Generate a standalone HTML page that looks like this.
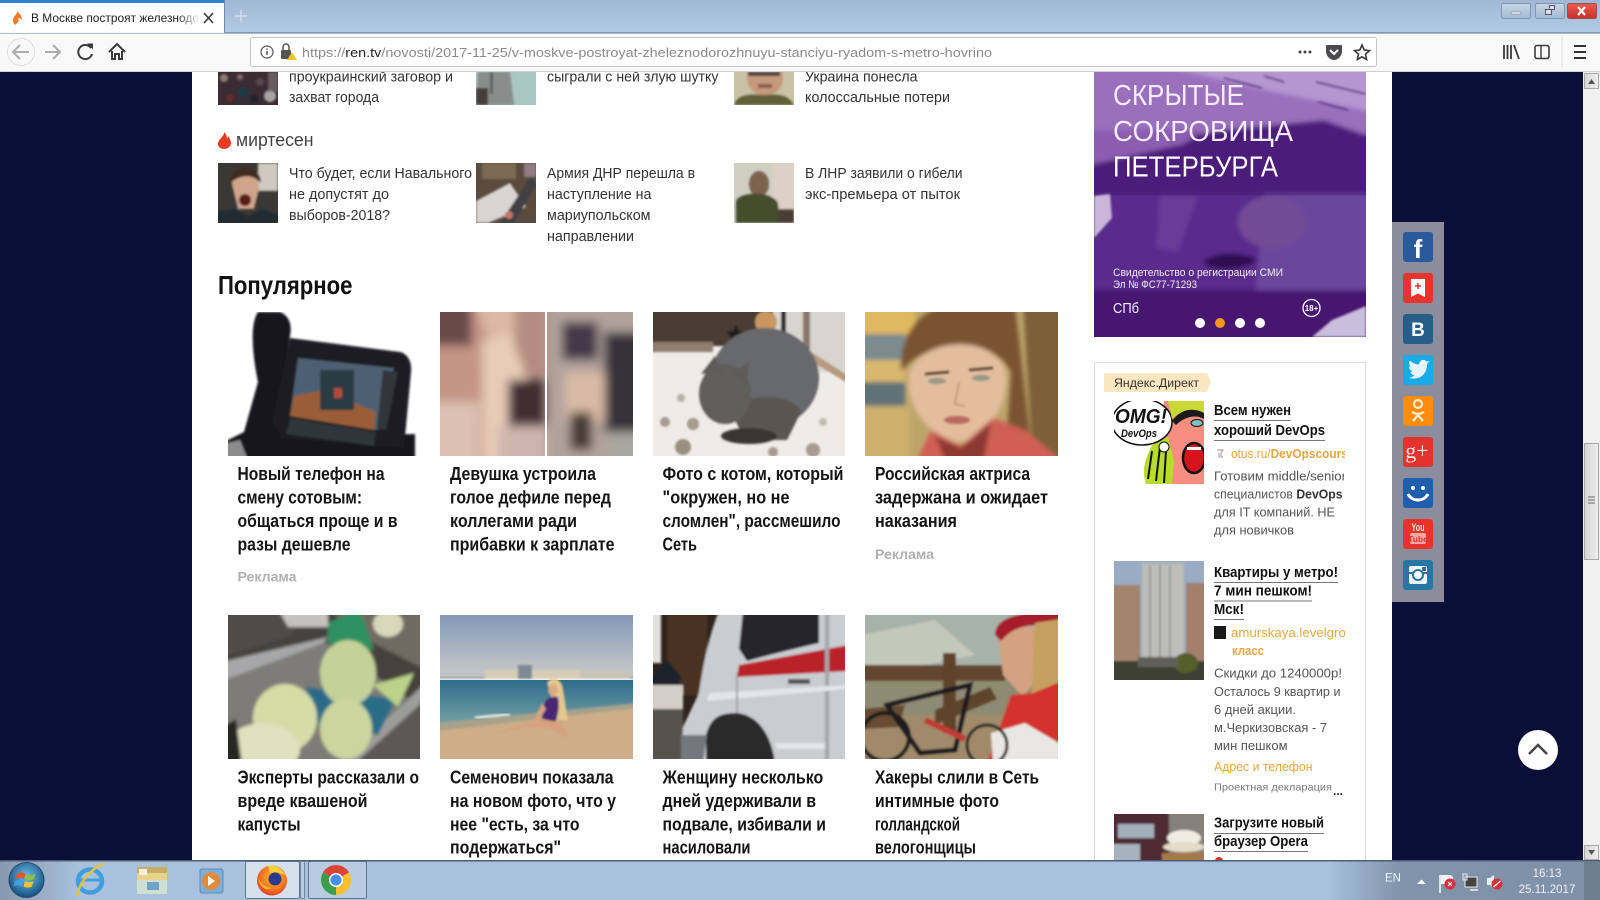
<!DOCTYPE html>
<html lang="ru"><head><meta charset="utf-8"><title>В Москве построят железнодорожную станцию</title>
<style>html,body{margin:0;padding:0;background:#0a0f38;overflow:hidden}svg{display:block}
text{font-family:"Liberation Sans","Noto Sans CJK SC",sans-serif}
.n{font-size:14.5px;fill:#333}.t{font-size:18px;font-weight:700;fill:#151515}.a{font-size:15px;font-weight:700;fill:#111}.d{font-size:13px;fill:#555}.o{font-size:13px;fill:#e9a63f}.r{font-size:13.5px;font-weight:700;fill:#b0b0b0}</style></head><body>
<svg xmlns="http://www.w3.org/2000/svg" width="1600" height="900" viewBox="0 0 1600 900">
<defs>
<linearGradient id="ti" x1="0" y1="0" x2="0" y2="1"><stop offset="0" stop-color="#a0b8d4"/><stop offset="1" stop-color="#b2cbe4"/></linearGradient>
<linearGradient id="tb" x1="0" y1="0" x2="1" y2="0"><stop offset="0" stop-color="#8799ad"/><stop offset=".05" stop-color="#a9c1dd"/><stop offset=".83" stop-color="#a9c1dd"/><stop offset=".875" stop-color="#7f93ab"/><stop offset="1" stop-color="#7f92a9"/></linearGradient>
<linearGradient id="sky" x1="0" y1="0" x2="0" y2="1"><stop offset="0" stop-color="#8499b8"/><stop offset="1" stop-color="#c6c8c8"/></linearGradient>
<linearGradient id="sea" x1="0" y1="0" x2="0" y2="1"><stop offset="0" stop-color="#2e6a8c"/><stop offset="1" stop-color="#7fa9a8"/></linearGradient>
<linearGradient id="cl" x1="0" y1="0" x2="0" y2="1"><stop offset="0" stop-color="#ee5a50"/><stop offset="1" stop-color="#c9302a"/></linearGradient>
<linearGradient id="btn" x1="0" y1="0" x2="0" y2="1"><stop offset="0" stop-color="#c8d6e6"/><stop offset="1" stop-color="#a3bad3"/></linearGradient>
<linearGradient id="st" x1="0" y1="0" x2="1" y2="0"><stop offset="0" stop-color="#d4d4d4"/><stop offset="1" stop-color="#efefef"/></linearGradient>
<linearGradient id="fade" x1="0" y1="0" x2="1" y2="0"><stop offset="0" stop-color="#fff" stop-opacity="0"/><stop offset="1" stop-color="#fff"/></linearGradient>
<radialGradient id="orb" cx=".5" cy=".4" r=".6"><stop offset="0" stop-color="#6fbde6"/><stop offset="1" stop-color="#14507f"/></radialGradient>
<radialGradient id="ff" cx=".55" cy=".4" r=".65"><stop offset="0" stop-color="#ffc02e"/><stop offset=".6" stop-color="#f57a1f"/><stop offset="1" stop-color="#e2332b"/></radialGradient>
<filter id="b1"><feGaussianBlur stdDeviation="1"/></filter>
<filter id="b15"><feGaussianBlur stdDeviation="1.6"/></filter>
<filter id="b2"><feGaussianBlur stdDeviation="2.5"/></filter>
<filter id="b3"><feGaussianBlur stdDeviation="5"/></filter>
</defs>

<rect width="1600" height="900" fill="#0a0f38"/>
<rect x="192" y="72" width="1200" height="790" fill="#fff"/>

<!-- top row thumbs -->
<svg x="218" y="72" width="60" height="33" viewBox="0 0 60 33"><rect width="60" height="33" fill="#3a2c33"/><g filter="url(#b1)"><circle cx="6" cy="6" r="4" fill="#8d7a73"/><circle cx="22" cy="5" r="3" fill="#7d6a63"/><circle cx="25" cy="20" r="5" fill="#1e3a4a"/><circle cx="42" cy="10" r="4" fill="#584a4c"/><circle cx="52" cy="24" r="6" fill="#a8a4a4"/><circle cx="12" cy="26" r="4" fill="#622c30"/><circle cx="36" cy="27" r="4" fill="#1c2028"/><rect x="50" y="0" width="10" height="20" fill="#7d6d6e" opacity=".7"/></g></svg>
<svg x="476" y="72" width="60" height="33" viewBox="0 0 60 33"><rect width="60" height="33" fill="#a9c6c2"/><g filter="url(#b1)"><path d="M2 0H34L38 33H0Z" fill="#8a8d8c"/><rect x="0" y="16" width="12" height="17" fill="#453e38"/><rect x="14" y="0" width="3" height="22" fill="#5c6060"/></g></svg>
<svg x="734" y="72" width="60" height="33" viewBox="0 0 60 33"><rect width="60" height="33" fill="#c9c2a8"/><g filter="url(#b1)"><ellipse cx="31" cy="6" rx="18" ry="18" fill="#c59a7c"/><path d="M0 33C4 22 14 22 30 23 44 22 54 22 60 33Z" fill="#5f6137"/><rect x="14" y="0" width="32" height="4" fill="#444"/><rect x="24" y="12" width="14" height="4" fill="#8a5a48"/></g></svg>

<text x="289" y="81.500" class="n" textLength="164" lengthAdjust="spacingAndGlyphs">проукраинский заговор и</text>
<text x="289" y="102" class="n" textLength="90" lengthAdjust="spacingAndGlyphs">захват города</text>
<text x="547" y="81.500" class="n" textLength="171.500" lengthAdjust="spacingAndGlyphs">сыграли с ней злую шутку</text>
<text x="805" y="81.500" class="n" textLength="112.500" lengthAdjust="spacingAndGlyphs">Украина понесла</text>
<text x="805" y="102" class="n" textLength="145" lengthAdjust="spacingAndGlyphs">колоссальные потери</text>

<!-- mirtesen -->
<path d="M224 132c1 4-6 7-6 12 0 3 3 5 6 5s7-2 7-6c0-3-2-4-2-7-1 1-2 2-2 3 0-3-1-5-3-7z" fill="#ea3b21"/>
<text x="236" y="146" font-size="18" fill="#444" textLength="77.500" lengthAdjust="spacingAndGlyphs">миртесен</text>

<!-- second row thumbs -->
<svg x="218" y="163" width="60" height="60" viewBox="0 0 60 60"><rect width="60" height="60" fill="#3a3834"/><g filter="url(#b1)"><rect x="40" y="0" width="20" height="28" fill="#cfcac1"/><path d="M14 22C12 4 42 4 41 26L36 46H20Z" fill="#d0a48a"/><path d="M12 20C13 0 43 0 43 20 34 10 22 12 12 20Z" fill="#3f2a1c"/><ellipse cx="27" cy="37" rx="6" ry="6" fill="#5a1c18"/><path d="M0 60V48L18 46 30 54 44 46 60 52V60Z" fill="#242c32"/></g></svg>
<svg x="476" y="163" width="60" height="60" viewBox="0 0 60 60"><rect width="60" height="60" fill="#5b4b3f"/><g filter="url(#b1)"><path d="M0 38 34 20 50 44 12 60H0Z" fill="#d8d5d4"/><path d="M24 60 56 12 60 22 38 60Z" fill="#3f3f44"/><rect x="6" y="0" width="34" height="16" fill="#7b6b52"/><rect x="48" y="0" width="12" height="14" fill="#8f7d84"/><circle cx="33" cy="52" r="4" fill="#c8735f"/></g></svg>
<svg x="734" y="163" width="60" height="60" viewBox="0 0 60 60"><rect width="60" height="60" fill="#cfcfc4"/><g filter="url(#b1)"><rect x="38" y="0" width="22" height="60" fill="#ddd0c5"/><ellipse cx="25" cy="21" rx="10" ry="13" fill="#7d6250"/><path d="M2 60V38C6 28 38 28 44 40L46 60Z" fill="#444d2b"/><rect x="44" y="46" width="16" height="14" fill="#4a3e34"/></g></svg>

<text x="289" y="178" class="n" textLength="183" lengthAdjust="spacingAndGlyphs">Что будет, если Навального</text>
<text x="289" y="199" class="n" textLength="100" lengthAdjust="spacingAndGlyphs">не допустят до</text>
<text x="289" y="220" class="n" textLength="101" lengthAdjust="spacingAndGlyphs">выборов-2018?</text>
<text x="547" y="178" class="n" textLength="148" lengthAdjust="spacingAndGlyphs">Армия ДНР перешла в</text>
<text x="547" y="199" class="n" textLength="104.500" lengthAdjust="spacingAndGlyphs">наступление на</text>
<text x="547" y="220" class="n" textLength="103.500" lengthAdjust="spacingAndGlyphs">мариупольском</text>
<text x="547" y="241" class="n" textLength="87" lengthAdjust="spacingAndGlyphs">направлении</text>
<text x="805" y="178" class="n" textLength="157.500" lengthAdjust="spacingAndGlyphs">В ЛНР заявили о гибели</text>
<text x="805" y="199" class="n" textLength="155" lengthAdjust="spacingAndGlyphs">экс-премьера от пыток</text>

<text x="218" y="294" font-size="26" font-weight="700" fill="#111" textLength="134.500" lengthAdjust="spacingAndGlyphs">Популярное</text>

<!-- phone -->
<svg x="228" y="312" width="192" height="144" viewBox="0 0 192 144"><rect width="192" height="144" fill="#fff"/><g filter="url(#b1)">
<path d="M30 0H52C62 4 64 14 62 24L56 60 48 110 54 126 187 122V148H-4V130L16 120 30 70C24 40 22 12 30 0Z" fill="#15181d"/>
<path d="M62 26 172 40C180 42 184 50 183 60L176 136 54 126 44 110Z" fill="#1b1e22"/>
<path d="M70 46 166 56 150 118 62 104Z" fill="#4e6073"/><path d="M66 84 96 78 148 100 146 118 62 104Z" fill="#9a5d38"/>
<rect x="92" y="58" width="34" height="40" fill="#2c3a42"/><rect x="106" y="76" width="8" height="10" fill="#b0483c"/>
<path d="M62 106 148 120 146 134 58 122Z" fill="#2f343a"/><path d="M155 58 170 60 158 118 149 116Z" fill="#30353a"/>
<path d="M-4 148V132L12 128 20 148Z" fill="#8c8c8c"/></g></svg>

<!-- blurred girl -->
<svg x="440" y="312" width="193" height="144" viewBox="0 0 193 144"><rect width="193" height="144" fill="#b48d80"/><g filter="url(#b3)"><rect x="-15" y="-15" width="70" height="175" fill="#c49585"/><rect x="-15" y="-15" width="47" height="49" fill="#6b4a48"/><rect x="-15" y="90" width="55" height="70" fill="#dcc0b2"/><path d="M32 -15H75V40L58 50Z" fill="#dcb8a6"/><path d="M42 30 70 20 85 60 80 160H44Z" fill="#e8ccb8"/><rect x="68" y="68" width="38" height="50" fill="#3f2d32"/><rect x="58" y="114" width="48" height="46" fill="#cdb6ae"/><rect x="107" y="-15" width="100" height="175" fill="#b0a39b"/><rect x="122" y="10" width="36" height="38" fill="#45394a"/><rect x="164" y="20" width="45" height="100" fill="#363338"/><rect x="125" y="60" width="40" height="50" fill="#d9baa6"/><rect x="130" y="100" width="22" height="38" fill="#4a3b36"/><rect x="168" y="120" width="40" height="40" fill="#a9a8a0"/></g><rect x="105" y="0" width="2" height="144" fill="#fff"/></svg>

<!-- cat -->
<svg x="653" y="312" width="192" height="144" viewBox="0 0 192 144"><rect width="192" height="144" fill="#efebe7"/><g filter="url(#b1)"><rect x="-4" y="-4" width="124" height="38" fill="#4a3c32"/><rect x="-4" y="30" width="64" height="10" fill="#8f7f70"/><rect x="120" y="-4" width="76" height="64" fill="#d8d5d0"/><path d="M150 -4h7v54h-7z" fill="#8a7668"/><path d="M158 40 196 64V72L156 48Z" fill="#b59a7e"/><path d="M128 -4h5v34h-5z" fill="#2c2a28"/><path d="M83 12l3 7 7 1-5 5 1 7-6-4-6 4 1-7-5-5 7-1z" fill="#241f1c"/><circle cx="113" cy="10" r="11" fill="#c9975e"/>
<ellipse cx="112" cy="66" rx="54" ry="50" fill="#68696d"/><path d="M78 100C90 80 140 80 148 100L134 128H92Z" fill="#5a5650"/><ellipse cx="72" cy="82" rx="26" ry="30" fill="#615f5b"/><path d="M48 62 62 44 70 60ZM80 60 96 50 94 74Z" fill="#5d5c5a"/><ellipse cx="96" cy="124" rx="28" ry="8" fill="#3b3632"/><circle cx="28" cy="86" r="4" fill="#b8aea4"/><circle cx="40" cy="112" r="6" fill="#a79a90"/><circle cx="12" cy="110" r="5" fill="#a79a90"/><circle cx="30" cy="135" r="8" fill="#99907f"/><circle cx="160" cy="138" r="7" fill="#a79a90"/><circle cx="170" cy="110" r="4" fill="#c2bbb0"/><circle cx="120" cy="140" r="5" fill="#a79a90"/></g></svg>

<!-- actress -->
<svg x="865" y="312" width="193" height="144" viewBox="0 0 193 144"><rect width="193" height="144" fill="#bda56a"/><g filter="url(#b2)"><rect x="-8" y="-8" width="58" height="30" fill="#dfb95f"/><rect x="-8" y="22" width="48" height="26" fill="#7b8b8e"/><rect x="-8" y="48" width="48" height="22" fill="#d9b76e"/><rect x="-8" y="70" width="48" height="24" fill="#5e7278"/><rect x="-8" y="94" width="53" height="58" fill="#ceaf6c"/><path d="M36 60C34 8 70-10 100 -8H150L168 152H140L146 60C130 26 60 26 36 60Z" fill="#7a5330"/><path d="M158 -8H201V152H168Z" fill="#7c6038"/><path d="M44 62C56 24 128 22 140 58 146 86 126 126 94 130 62 124 40 94 44 62Z" fill="#e3bd9d"/><path d="M50 152 66 118 96 134 128 106 160 118 201 152Z" fill="#cf6152"/><path d="M70 124 96 136 126 110 118 152H82Z" fill="#8e3730"/></g><g filter="url(#b1)"><path d="M60 62 84 60M104 58 128 56" stroke="#5a4230" stroke-width="2.500"/><ellipse cx="72" cy="69" rx="9" ry="3" fill="#9a9886"/><ellipse cx="116" cy="66" rx="9" ry="3" fill="#9a9886"/><path d="M94 70 90 92 100 94" stroke="#c09478" stroke-width="1.500" fill="none"/><ellipse cx="92" cy="108" rx="13" ry="4" fill="#bb6a60"/></g></svg>

<g transform="translate(0,.2)">
<text x="237.500" y="480" class="t" textLength="147" lengthAdjust="spacingAndGlyphs">Новый телефон на</text>
<text x="237.500" y="503.500" class="t" textLength="124.500" lengthAdjust="spacingAndGlyphs">смену сотовым:</text>
<text x="237.500" y="527" class="t" textLength="160" lengthAdjust="spacingAndGlyphs">общаться проще и в</text>
<text x="237.500" y="550.500" class="t" textLength="113" lengthAdjust="spacingAndGlyphs">разы дешевле</text>
<text x="450" y="480" class="t" textLength="146" lengthAdjust="spacingAndGlyphs">Девушка устроила</text>
<text x="450" y="503.500" class="t" textLength="161" lengthAdjust="spacingAndGlyphs">голое дефиле перед</text>
<text x="450" y="527" class="t" textLength="127" lengthAdjust="spacingAndGlyphs">коллегами ради</text>
<text x="450" y="550.500" class="t" textLength="164.500" lengthAdjust="spacingAndGlyphs">прибавки к зарплате</text>
<text x="662.500" y="480" class="t" textLength="181" lengthAdjust="spacingAndGlyphs">Фото с котом, который</text>
<text x="662.500" y="503.500" class="t" textLength="127" lengthAdjust="spacingAndGlyphs">"окружен, но не</text>
<text x="662.500" y="527" class="t" textLength="178" lengthAdjust="spacingAndGlyphs">сломлен", рассмешило</text>
<text x="662.500" y="550.500" class="t" textLength="34.500" lengthAdjust="spacingAndGlyphs">Сеть</text>
<text x="875" y="480" class="t" textLength="155" lengthAdjust="spacingAndGlyphs">Российская актриса</text>
<text x="875" y="503.500" class="t" textLength="173" lengthAdjust="spacingAndGlyphs">задержана и ожидает</text>
<text x="875" y="527" class="t" textLength="82" lengthAdjust="spacingAndGlyphs">наказания</text>
</g>
<text x="237.500" y="581.500" class="r" textLength="59" lengthAdjust="spacingAndGlyphs">Реклама</text>
<text x="875" y="559" class="r" textLength="59" lengthAdjust="spacingAndGlyphs">Реклама</text>

<!-- cabbage -->
<svg x="228" y="615" width="192" height="144" viewBox="0 0 192 144"><rect width="192" height="144" fill="#44423c"/><g filter="url(#b15)"><rect x="-6" y="-6" width="204" height="156" fill="#44423c"/><path d="M-6 -6H70L65 20 -6 42Z" fill="#4f4c49"/><path d="M50 -6H100V12L60 12Z" fill="#c5c3bd"/><path d="M100 -6H198V55L130 20Z" fill="#6f6a62"/><path d="M100 8 132 -6 146 35 100 28Z" fill="#2e9160"/><ellipse cx="160" cy="9" rx="15" ry="13" fill="#dad7bc"/><path d="M-6 52 95 25 190 90 120 150H30L-6 110Z" fill="#7d7b78"/><path d="M-6 47 100 22 95 28 -6 66Z" fill="#a7a7a9"/><path d="M198 65V150H112Z" fill="#5c5854"/><path d="M198 68V84L125 150H108Z" fill="#9c9c9a"/><path d="M78 72 168 84 150 120 82 105Z" fill="#2a6c88"/><ellipse cx="120" cy="58" rx="28" ry="33" fill="#c6d19a"/><path d="M145 70 186 58 170 92Z" fill="#bcd28a"/><ellipse cx="57" cy="103" rx="32" ry="34" fill="#d6dca6"/><ellipse cx="118" cy="114" rx="26" ry="30" fill="#ccd59e"/><ellipse cx="35" cy="134" rx="37" ry="26" fill="#e0e1be"/><path d="M-6 112 8 104 14 150H-6Z" fill="#262520"/></g></svg>

<!-- beach -->
<svg x="440" y="615" width="193" height="144" viewBox="0 0 193 144"><rect width="193" height="60" fill="url(#sky)"/><g filter="url(#b1)"><rect x="-4" y="60" width="201" height="4" fill="#a8aeae"/><rect x="45" y="55" width="100" height="9" fill="#d7cdb6"/><rect x="78" y="50" width="14" height="14" fill="#7e8a94"/><rect x="140" y="56" width="50" height="8" fill="#c8c4b8"/></g><rect y="65" width="193" height="50" fill="url(#sea)"/><path d="M0 112 193 90V144H0Z" fill="#cdae88"/><path d="M-4 108 197 88V93L-4 116Z" fill="#a9a18a" filter="url(#b1)"/><path d="M35 103 70 99" stroke="#e3e6e0" stroke-width="3" filter="url(#b1)"/><g filter="url(#b1)" transform="translate(0,18)"><path d="M107 50C112 42 122 46 123 56L128 88 118 86Z" fill="#e5c98f"/><ellipse cx="113" cy="57" rx="5" ry="6" fill="#d9aa84"/><path d="M102 82C103 68 108 62 118 64 120 74 118 84 114 90 108 92 102 90 102 82Z" fill="#4a2773"/><path d="M102 86 48 102 88 94 112 96 130 106 122 90Z" fill="#d7a27d"/><path d="M102 70 92 92 96 92 106 76Z" fill="#d7a27d"/></g></svg>

<!-- ambulance -->
<svg x="653" y="615" width="192" height="144" viewBox="0 0 192 144"><rect width="192" height="144" fill="#2f241d"/><g filter="url(#b1)"><rect x="-4" y="-4" width="12" height="52" fill="#e2e2dc"/><rect x="14" y="-4" width="40" height="84" fill="#4a3224"/><path d="M-4 66 14 44 28 62 26 72H-4Z" fill="#1e222a"/><rect x="-4" y="72" width="34" height="76" fill="#57534e"/><rect x="-4" y="70" width="34" height="24" fill="#d5cec8"/><path d="M66 -4H196V148H28L30 112 46 78C50 50 56 20 66 -4Z" fill="#c9ccd0"/><path d="M90 -4H166V28C140 34 116 40 94 46L86 34Z" fill="#26272a"/><path d="M86 50 196 30V56L84 62Z" fill="#ba2029"/><path d="M172 -4H176V148H172Z" fill="#a4a6a8"/><path d="M56 78 196 70V74L54 86Z" fill="#e3e6e8"/><path d="M84 58V100" stroke="#8f9296" stroke-width="1.500"/><rect x="135" y="64" width="22" height="5" fill="#555"/><path d="M53 148V120C58 100 70 98 84 98 104 100 118 118 122 148Z" fill="#2a2929"/><path d="M28 148V120H54L50 148Z" fill="#73777e"/><path d="M122 128H172V134H124Z" fill="#e3e6e8"/></g></svg>

<!-- cyclist -->
<svg x="865" y="615" width="193" height="144" viewBox="0 0 193 144"><rect width="193" height="144" fill="#a59b82"/><g filter="url(#b1)"><rect x="-4" y="-4" width="201" height="56" fill="#a7b2a9"/><path d="M-4 20 70 5 110 40 60 50H-4Z" fill="#c3c8bb"/><rect x="-4" y="100" width="201" height="48" fill="#a08a6a"/><rect x="-4" y="50" width="201" height="50" fill="#8f8a72"/><rect x="-4" y="50" width="144" height="16" fill="#62472e"/><rect x="78" y="38" width="13" height="80" fill="#5e432b"/><path d="M-4 94 40 90 34 112 -4 114Z" fill="#684b31"/><path d="M70 95 125 72 132 84 70 110Z" fill="#5d442c"/><path d="M132 12H172L176 60 158 82 138 60Z" fill="#d3a281"/><path d="M130 20C130 4 150-4 197 -4V12C165 8 150 10 136 26Z" fill="#a51f2a"/><path d="M170 8 197 4V90H166Z" fill="#c6a060"/><path d="M146 80 168 78 197 66V148H122Z" fill="#d3322f"/><path d="M126 118 160 108 197 130V148H128Z" fill="#e9e7e3"/><circle cx="20" cy="122" r="24" fill="none" stroke="#1a1a1c" stroke-width="4"/><path d="M22 90 105 70 90 135 55 138Z" fill="none" stroke="#1d1d20" stroke-width="5"/><path d="M60 105 100 124" stroke="#c13a30" stroke-width="6"/><circle cx="122" cy="130" r="20" fill="none" stroke="#1a1a1c" stroke-width="3"/></g></svg>

<g transform="translate(0,.2)">
<text x="237.500" y="783.500" class="t" textLength="181.500" lengthAdjust="spacingAndGlyphs">Эксперты рассказали о</text>
<text x="237.500" y="807" class="t" textLength="130" lengthAdjust="spacingAndGlyphs">вреде квашеной</text>
<text x="237.500" y="830.500" class="t" textLength="63" lengthAdjust="spacingAndGlyphs">капусты</text>
<text x="450" y="783.500" class="t" textLength="163.500" lengthAdjust="spacingAndGlyphs">Семенович показала</text>
<text x="450" y="807" class="t" textLength="166" lengthAdjust="spacingAndGlyphs">на новом фото, что у</text>
<text x="450" y="830.500" class="t" textLength="129.500" lengthAdjust="spacingAndGlyphs">нее "есть, за что</text>
<text x="450" y="853.500" class="t" textLength="111" lengthAdjust="spacingAndGlyphs">подержаться"</text>
<text x="662.500" y="783.500" class="t" textLength="160.700" lengthAdjust="spacingAndGlyphs">Женщину несколько</text>
<text x="662.500" y="807" class="t" textLength="153.600" lengthAdjust="spacingAndGlyphs">дней удерживали в</text>
<text x="662.500" y="830.500" class="t" textLength="163.500" lengthAdjust="spacingAndGlyphs">подвале, избивали и</text>
<text x="662.500" y="853.500" class="t" textLength="88" lengthAdjust="spacingAndGlyphs">насиловали</text>
<text x="875" y="783.500" class="t" textLength="164" lengthAdjust="spacingAndGlyphs">Хакеры слили в Сеть</text>
<text x="875" y="807" class="t" textLength="124" lengthAdjust="spacingAndGlyphs">интимные фото</text>
<text x="875" y="830.500" class="t" textLength="85" lengthAdjust="spacingAndGlyphs">голландской</text>
<text x="875" y="853.500" class="t" textLength="101" lengthAdjust="spacingAndGlyphs">велогонщицы</text>
</g>

<!-- banner -->
<svg x="1094" y="72" width="272" height="265" viewBox="0 0 272 265"><rect width="272" height="265" fill="#52237f"/><g filter="url(#b2)"><rect x="-8" y="-8" width="288" height="70" fill="#9a6fbd"/><path d="M60 -8H280V40L180 20Z" fill="#b596d0"/><path d="M-8 84 130 58 230 48 280 66V122H-8Z" fill="#4b1d79"/><path d="M-8 58 110 58 90 72 -8 94Z" fill="#8b5cb0"/><path d="M-8 122H280V230L-8 273Z" fill="#5a2a8c"/><path d="M170 122H280V240H160Z" fill="#6a469d"/><path d="M66 124 104 124 84 180 62 176Z" fill="#6a3a98"/><ellipse cx="178" cy="150" rx="34" ry="26" fill="#724c96"/><path d="M108 190C124 178 150 180 164 188 150 198 122 202 108 190Z" fill="#2d0f52"/><path d="M-8 218H280V273H-8Z" fill="#47196f"/></g><path d="M0 122H272" stroke="#3a1366" opacity=".4"/><path d="M0 124 16 122 18 146 0 166Z" fill="#c9b7da" filter="url(#b1)"/><path d="M218 265 238 248 272 234V265Z" fill="#c9bedb" filter="url(#b1)"/><g filter="url(#b1)" opacity=".7"><path d="M222 10 272 22M130 6 168 16M224 30 254 38M170 4 190 10" stroke="#3e1a62" stroke-width="1.500"/></g></svg>
<text x="1113" y="105" font-size="29" fill="#f4ecf8" textLength="131" lengthAdjust="spacingAndGlyphs">СКРЫТЫЕ</text>
<text x="1113" y="141" font-size="29" fill="#f4ecf8" textLength="180" lengthAdjust="spacingAndGlyphs">СОКРОВИЩА</text>
<text x="1113" y="176.500" font-size="29" fill="#fff" textLength="165" lengthAdjust="spacingAndGlyphs">ПЕТЕРБУРГА</text>
<text x="1113" y="276" font-size="11" fill="#eee" textLength="170" lengthAdjust="spacingAndGlyphs">Свидетельство о регистрации СМИ</text>
<text x="1113" y="288" font-size="11" fill="#eee" textLength="84" lengthAdjust="spacingAndGlyphs">Эл № ФС77-71293</text>
<text x="1113" y="313" font-size="15" fill="#f2f2f2" textLength="26" lengthAdjust="spacingAndGlyphs">СПб</text>
<circle cx="1311.500" cy="308" r="8.500" fill="none" stroke="#fff" stroke-width="1.300"/>
<text x="1311.500" y="311" font-size="8" font-weight="700" fill="#fff" text-anchor="middle">18+</text>
<circle cx="1200" cy="323" r="5" fill="#fff"/><circle cx="1220" cy="323" r="5" fill="#f7941e"/><circle cx="1240" cy="323" r="5" fill="#fff"/><circle cx="1260" cy="323" r="5" fill="#fff"/>

<!-- ad box -->
<path d="M1094.500 863V362.500H1365.500V863" fill="none" stroke="#ddd"/>
<path d="M1104 373H1207L1211 382.500 1207 392H1104Z" fill="#fbe6c2"/>
<text x="1114" y="387" font-size="12" fill="#333" textLength="85" lengthAdjust="spacingAndGlyphs">Яндекс.Директ</text>

<svg x="1114" y="401" width="90" height="83" viewBox="0 0 90 83"><rect width="90" height="83" fill="#fff"/><path d="M50 0H90V83H40Z" fill="#f58d80"/><path d="M54 36 60 60 58 83H32C26 66 34 54 38 44Z" fill="#b9dc2c"/><path d="M46 46 42 80M52 50 50 82M38 50 34 78" stroke="#111" stroke-width="2"/><ellipse cx="28" cy="21" rx="30" ry="23" fill="#fff" stroke="#111" stroke-width="1.500"/><path d="M58 18C70 6 84 10 90 14L90 0H54Z" fill="#c8d834"/><path d="M62 24C72 14 84 14 90 18L90 12C80 6 66 8 58 20Z" fill="#1b1b1b"/><ellipse cx="80" cy="57" rx="11" ry="15" fill="#d4141a" stroke="#111" stroke-width="2.500"/><rect x="73" y="46" width="14" height="3" fill="#fff"/><ellipse cx="83" cy="22" rx="6" ry="3.500" fill="#7ec0c0" stroke="#111"/><text x="1" y="22" font-size="20" font-weight="700" font-style="italic" fill="#111" textLength="52" lengthAdjust="spacingAndGlyphs">OMG!</text><text x="7" y="36" font-size="11" font-weight="700" font-style="italic" fill="#111" textLength="36" lengthAdjust="spacingAndGlyphs">DevOps</text><circle cx="50" cy="46" r="5" fill="#fff" stroke="#111"/></svg>

<text x="1214" y="415" class="a" textLength="77" lengthAdjust="spacingAndGlyphs">Всем нужен</text><path d="M1214 420.500h77M1214 440.500h111" stroke="#777"/>
<text x="1214" y="435" class="a" textLength="111" lengthAdjust="spacingAndGlyphs">хороший DevOps</text>
<path d="M1217 450h6l-2 3v4h2M1219 453v5" stroke="#999" fill="none"/>
<svg x="1231" y="445" width="114" height="18"><text x="0" y="13" class="o" textLength="130" lengthAdjust="spacingAndGlyphs">otus.ru/<tspan font-weight="700">DevOpscourses</tspan></text></svg>
<svg x="1214" y="465" width="130" height="76"><text x="0" y="15.700" class="d" textLength="132" lengthAdjust="spacingAndGlyphs">Готовим middle/senior</text><text x="0" y="33.700" class="d" textLength="128.500" lengthAdjust="spacingAndGlyphs">специалистов <tspan font-weight="700" fill="#333">DevOps</tspan></text><text x="0" y="51.700" class="d" textLength="121" lengthAdjust="spacingAndGlyphs">для IT компаний. НЕ</text><text x="0" y="69.700" class="d" textLength="80" lengthAdjust="spacingAndGlyphs">для новичков</text></svg>

<svg x="1114" y="561" width="90" height="119" viewBox="0 0 90 119"><rect width="90" height="119" fill="#9aabc4"/><g filter="url(#b1)"><rect y="24" x="-4" width="30" height="80" fill="#a2846c"/><rect x="72" y="22" width="22" height="82" fill="#a2806a"/><rect x="28" y="2" width="42" height="100" fill="#bdbdb9"/><path d="M36 4V98M46 4V98M56 4V98" stroke="#8f8f8f" stroke-width="1.500"/><rect x="-4" y="100" width="98" height="23" fill="#3e3f32"/><ellipse cx="72" cy="102" rx="12" ry="10" fill="#565f2c"/><rect x="24" y="96" width="40" height="10" fill="#606058"/></g></svg>

<text x="1214" y="577" class="a" textLength="124" lengthAdjust="spacingAndGlyphs">Квартиры у метро!</text>
<text x="1214" y="595.500" class="a" textLength="98" lengthAdjust="spacingAndGlyphs">7 мин пешком!</text>
<text x="1214" y="614" class="a" textLength="30" lengthAdjust="spacingAndGlyphs">Мск!</text>
<path d="M1214 582.500h124M1214 601h98M1214 619.500h30" stroke="#777"/>
<rect x="1214" y="626" width="12" height="13" fill="#1a1a1a"/>
<svg x="1231" y="624" width="114" height="18"><text x="0" y="13" class="o" textLength="145" lengthAdjust="spacingAndGlyphs">amurskaya.levelgroup.ru</text></svg>
<text x="1232" y="655" class="o" font-weight="700" textLength="32" lengthAdjust="spacingAndGlyphs">класс</text>
<text x="1214" y="677.500" class="d" textLength="128" lengthAdjust="spacingAndGlyphs">Скидки до 1240000р!</text>
<text x="1214" y="696" class="d" textLength="126.500" lengthAdjust="spacingAndGlyphs">Осталось 9 квартир и</text>
<text x="1214" y="714" class="d" textLength="82" lengthAdjust="spacingAndGlyphs">6 дней акции.</text>
<text x="1214" y="732" class="d" textLength="113" lengthAdjust="spacingAndGlyphs">м.Черкизовская - 7</text>
<text x="1214" y="750" class="d" textLength="73.500" lengthAdjust="spacingAndGlyphs">мин пешком</text>
<text x="1214" y="771" class="o" textLength="98.500" lengthAdjust="spacingAndGlyphs">Адрес и телефон</text>
<text x="1214" y="790.500" font-size="10" fill="#777" textLength="118" lengthAdjust="spacingAndGlyphs">Проектная декларация</text>
<text x="1333" y="795" font-size="12" font-weight="700" fill="#222" textLength="10" lengthAdjust="spacingAndGlyphs">...</text>

<svg x="1114" y="814" width="90" height="46" viewBox="0 0 90 46"><rect width="90" height="46" fill="#8c7a72"/><g filter="url(#b1)"><path d="M-4 -4H55V50H-4Z" fill="#4f2a34"/><rect x="4" y="10" width="36" height="14" fill="#a3b0bc"/><path d="M-4 30H26V50H-4Z" fill="#a7b2be"/><rect x="55" y="-4" width="39" height="54" fill="#85807a"/><ellipse cx="70" cy="24" rx="17" ry="8" fill="#f0ece2"/><ellipse cx="70" cy="33" rx="21" ry="5" fill="#e4ddc8"/><rect x="48" y="39" width="46" height="11" fill="#a5784a"/></g></svg>
<text x="1214" y="827.500" class="a" textLength="110" lengthAdjust="spacingAndGlyphs">Загрузите новый</text>
<text x="1214" y="846" class="a" textLength="94" lengthAdjust="spacingAndGlyphs">браузер Opera</text>
<path d="M1214 833.500h110M1214 851.500h94" stroke="#777"/>
<circle cx="1219" cy="861" r="4" fill="#d9362b"/>

<!-- social -->
<rect x="1392" y="222" width="52" height="380" fill="#8b8c9c"/>
<rect x="1403" y="232" width="30" height="30" rx="3" fill="#2a5a9b"/>
<text x="1418" y="258" font-size="26" font-weight="700" fill="#fff" text-anchor="middle">f</text>
<rect x="1403" y="273" width="30" height="30" rx="3" fill="#e8342c"/>
<path d="M1411 279h14v18l-7-3.500-7 3.500z" fill="#fff"/><path d="M1418 283v6M1415 286h6" stroke="#e8342c" stroke-width="1.500"/>
<rect x="1403" y="314" width="30" height="30" rx="3" fill="#275e89"/>
<text x="1418" y="336" font-size="19" font-weight="700" fill="#fff" text-anchor="middle">B</text>
<rect x="1403" y="355" width="30" height="30" rx="3" fill="#17ace9"/>
<path d="M1409 378c8 2 18-1 18-14l2.500-3-3 .5c-2-3-7-2-7.500 3-4 0-7-2-9.500-4-1 3 0 5 1.500 6l-2 0c0 2 1 4 3.500 5l-2 .5c1 2 2 3 4 3-1 1.500-3.500 2.500-5.500 3z" fill="#e7f6fd"/>
<rect x="1403" y="396" width="30" height="30" rx="3" fill="#fb8c0d"/>
<circle cx="1418" cy="404" r="4" fill="none" stroke="#fde9c8" stroke-width="2.200"/><path d="M1412 412c4 2.500 8 2.500 12 0M1418 415l-5 6M1418 415l5 6" stroke="#fde9c8" stroke-width="2.500" fill="none"/>
<rect x="1403" y="437" width="30" height="30" rx="3" fill="#e4322e"/>
<text x="1417" y="458" font-size="22" fill="#fbe3e0" text-anchor="middle" style="font-family:'Liberation Serif',serif">g+</text>
<rect x="1403" y="478" width="30" height="30" rx="3" fill="#1e5eab"/>
<circle cx="1413" cy="488" r="2" fill="#fff"/><circle cx="1423" cy="488" r="2" fill="#fff"/><path d="M1408 494c4 8 16 8 20 0" stroke="#fff" stroke-width="3" fill="none"/>
<rect x="1403" y="519" width="30" height="30" rx="3" fill="#e8332a"/>
<text x="1418" y="531" font-size="11" font-weight="700" fill="#fbe3e0" text-anchor="middle" textLength="13" lengthAdjust="spacingAndGlyphs">You</text><rect x="1410" y="533" width="16" height="11" rx="2" fill="#f2a8a4"/><text x="1418" y="542" font-size="8.500" font-weight="700" fill="#d8332a" text-anchor="middle">Tube</text>
<rect x="1403" y="560" width="30" height="30" rx="3" fill="#2677a6"/>
<rect x="1409" y="566" width="18" height="18" rx="2" fill="#f2f2f2"/><rect x="1409" y="572" width="18" height="2" fill="#2677a6"/><circle cx="1418" cy="575" r="5" fill="#fff" stroke="#2677a6" stroke-width="2"/><rect x="1422" y="567" width="4" height="4" fill="#2677a6"/>

<!-- up button -->
<circle cx="1538" cy="750" r="20" fill="#fff"/><path d="M1529 754l9-9 9 9" fill="none" stroke="#444" stroke-width="2.500"/>

<!-- page scrollbar -->
<rect x="1583" y="72" width="17" height="788" fill="#f0f0f0"/>
<rect x="1584.500" y="73.500" width="14" height="15" fill="url(#st)" stroke="#a8a8a8"/><path d="M1588 84l3.500-5 3.500 5z" fill="#555"/>
<rect x="1584.500" y="443.500" width="14" height="116" fill="url(#st)" stroke="#a8a8a8"/><path d="M1588 497h7M1588 500h7M1588 503h7" stroke="#666"/>
<rect x="1584.500" y="845.500" width="14" height="14" fill="url(#st)" stroke="#a8a8a8"/><path d="M1588 850l3.500 5 3.500-5z" fill="#555"/>

<!-- browser chrome -->
<rect width="1600" height="33" fill="url(#ti)"/>
<rect x="0" y="3" width="224" height="30" fill="#fff"/><rect width="224" height="3" fill="#2d7fcf"/><path d="M224.500 0V33" stroke="#6f8aa8"/>
<path d="M0 32.500H1600" stroke="#8396ab"/><rect y="32" width="224" height="2" fill="#f9f9fa"/>
<path d="M17 11c1 3-4 5-4 9 0 3 1 4 2 5l4-4c-1-1-1-2 0-3 2 0 2 2 3 2 0-4-2-6-5-9z" fill="#f47a2a"/>
<text x="31" y="22" font-size="12" fill="#222" textLength="168" lengthAdjust="spacingAndGlyphs">В Москве построят железнодо</text>
<rect x="178" y="8" width="22" height="20" fill="url(#fade)"/>
<path d="M204 13l9 10M213 13l-9 10" stroke="#3a3a3a" stroke-width="1.600"/>
<path d="M241 10v12M235 16h12" stroke="#c9d9ea" stroke-width="2"/>

<rect x="1501.500" y="3.500" width="29" height="15" rx="2" fill="url(#btn)" stroke="#7e97b2"/><rect x="1511" y="12" width="10" height="2" fill="#fff" stroke="#667"  stroke-width=".5"/>
<rect x="1535.500" y="3.500" width="29" height="15" rx="2" fill="url(#btn)" stroke="#7e97b2"/><path d="M1548.500 9.500h6v-4h-5v3M1545.500 9.500h6v5h-6z" fill="#dde" stroke="#556"/>
<rect x="1567.500" y="3.500" width="29" height="15" rx="2" fill="url(#cl)" stroke="#a14b4b"/><path d="M1578 7l7 8M1585 7l-7 8" stroke="#fff" stroke-width="2.200"/>

<rect y="33" width="1600" height="39" fill="#f9f9fa"/><rect x="0" y="33" width="1600" height="1" fill="#a9bdd2"/><rect y="71" width="1600" height="1" fill="#d0d0d0"/>
<circle cx="21" cy="52" r="13.500" fill="#f9f9fa" stroke="#dcdcdc"/><path d="M29 52H14M20 45l-7 7 7 7" fill="none" stroke="#adadad" stroke-width="2"/>
<path d="M45 52H60M53 45l7 7-7 7" fill="none" stroke="#adadad" stroke-width="2"/>
<path d="M91 48a7 7 0 1 0 1 6" fill="none" stroke="#3a3a3a" stroke-width="2"/><path d="M87 43.500l6 0 0 6z" fill="#3a3a3a"/>
<path d="M109 52l8-8 8 8M112 51v8h3v-5h4v5h3v-8" fill="none" stroke="#3a3a3a" stroke-width="2"/>

<rect x="250.500" y="37.500" width="1126" height="29" rx="2" fill="#fff" stroke="#c4c4c4"/>
<circle cx="267" cy="52" r="6" fill="none" stroke="#555" stroke-width="1.200"/><path d="M267 51v4M267 48.500v1.300" stroke="#555" stroke-width="1.500"/>
<rect x="281" y="50" width="10" height="9" rx="1" fill="#555"/><path d="M283 50v-3a3 3 0 0 1 6 0v3" fill="none" stroke="#555" stroke-width="1.500"/><path d="M287 60l5-8 5 8z" fill="#f2c12e"/>
<text x="302" y="57" font-size="13" fill="#8a8a8a" textLength="690" lengthAdjust="spacingAndGlyphs">https://<tspan fill="#222">ren.tv</tspan>/novosti/2017-11-25/v-moskve-postroyat-zheleznodorozhnuyu-stanciyu-ryadom-s-metro-hovrino</text>
<circle cx="1300" cy="52" r="1.500" fill="#444"/><circle cx="1305" cy="52" r="1.500" fill="#444"/><circle cx="1310" cy="52" r="1.500" fill="#444"/>
<path d="M1327 45h14c1 0 1 1 1 2v4c0 5-4 9-8 9s-8-4-8-9v-4c0-1 0-2 1-2z" fill="#4a4a4f"/><path d="M1330 50l4 4 4-4" stroke="#fff" stroke-width="2" fill="none"/>
<path d="M1362 45l2.200 5 5.300.6-4 3.600 1.100 5.300-4.600-2.700-4.600 2.700 1.100-5.300-4-3.600 5.300-.6z" fill="none" stroke="#3a3a3a" stroke-width="1.600"/>
<path d="M1504 45v14M1507.500 45v14M1511 45v14M1514 45l5 14" stroke="#3a3a3a" stroke-width="1.800"/>
<rect x="1535" y="45.500" width="14" height="13" rx="2" fill="none" stroke="#3a3a3a" stroke-width="1.600"/><path d="M1541 46v12" stroke="#3a3a3a" stroke-width="1.400"/>
<path d="M1562 36v32" stroke="#e2e2e2"/>
<path d="M1574 46h12M1574 52h12M1574 58h12" stroke="#333" stroke-width="2"/>

<!-- taskbar -->
<rect y="860" width="1600" height="40" fill="url(#tb)"/><rect y="860" width="1600" height="1.500" fill="#4c5f78"/>
<rect x="1584" y="862" width="16" height="38" fill="#707f90"/>
<circle cx="26.500" cy="880" r="17.500" fill="url(#orb)" stroke="#28486a"/>
<path d="M17 874c3-2 6-2 8.500 0l-1.500 5c-3-1.500-6-1.500-8.500 0z" fill="#e8542c"/><path d="M27 874c3 1.500 6 1.500 8.500-.5l-1.500 5.500c-3 1.500-5.500 1.500-8.500 0z" fill="#8fc23c"/><path d="M15 881c3-1.500 6-1.500 8.500 0l-1.500 5.500c-3-1.500-6-1.500-8.500 0z" fill="#42a2dc"/><path d="M25 881c3 1.500 6 1.500 8.500 0l-1.500 5.500c-3 1.500-5.500 1.500-8.500 0z" fill="#f2c22e"/>
<ellipse cx="90" cy="881" rx="12" ry="11.500" fill="none" stroke="#3f9ee0" stroke-width="4.500"/><path d="M79 880h22" stroke="#3f9ee0" stroke-width="3"/><path d="M77 896c2-12 12-26 27-33" stroke="#e8c23c" stroke-width="2.500" fill="none"/>
<rect x="137" y="867" width="30" height="26" fill="#e8d38a"/><rect x="137" y="867" width="30" height="6" fill="#c8ae62"/><rect x="137" y="880" width="30" height="14" fill="#cfe0d0"/><rect x="147" y="882" width="12" height="8" fill="#6fa3c9"/><rect x="139" y="869" width="8" height="6" fill="#f5f1de"/>
<rect x="200" y="869" width="23" height="24" rx="2" fill="#7daed8"/><rect x="200" y="869" width="23" height="24" rx="2" fill="none" stroke="#5d8cb8"/><circle cx="211" cy="881" r="9" fill="#e08a3c"/><path d="M208 876l7 5-7 5z" fill="#fff"/>
<rect x="245.500" y="861.500" width="54" height="37" rx="2" fill="#d5e0ec" stroke="#5f7690"/>
<rect x="300.500" y="861.500" width="4" height="37" rx="1" fill="#b8cbe0" stroke="#70879f"/>
<rect x="308.500" y="861.500" width="58" height="37" rx="2" fill="#b9cbe0" stroke="#5f7690"/>
<circle cx="272" cy="880.500" r="15" fill="url(#ff)"/><circle cx="275" cy="879" r="6.500" fill="#2b3a8a"/><path d="M268 866c8-2 14 3 18 10-4-3-10-5-16-3z" fill="#ffcf3a"/><path d="M258 878c3 6 8 10 14 10-6 3-12 0-14-10z" fill="#ffb52e"/>
<path d="M323 872.500a15 15 0 0 1 26 0L336 880z" fill="#db4537"/><path d="M349 872.500a15 15 0 0 1-13 22.500L336 880z" fill="#fbc02d"/><path d="M336 895a15 15 0 0 1-13-22.500L336 880z" fill="#3b9e4a"/><circle cx="336" cy="880" r="7" fill="#fff"/><circle cx="336" cy="880" r="5.500" fill="#4a8de8"/>
<text x="1393" y="881.500" font-size="11.500" fill="#eef3f8" text-anchor="middle">EN</text>
<path d="M1417 884l4.500-4.500 4.500 4.500z" fill="#fff"/>
<path d="M1440 875v18" stroke="#fff" stroke-width="1.500"/><path d="M1441 875h10l2 2v7h-12z" fill="#f2f2f2"/><circle cx="1450" cy="884" r="5.500" fill="#d7303a"/><path d="M1448 882l4 4M1452 882l-4 4" stroke="#fff"/>
<rect x="1465" y="877" width="12" height="10" fill="#444" stroke="#eee"/><path d="M1470 890h8" stroke="#eee" stroke-width="1.500"/><rect x="1463" y="874" width="4" height="6" fill="none" stroke="#eee"/>
<path d="M1487 878h3l4-3v13l-4-3h-3z" fill="#eee"/><circle cx="1497" cy="884" r="5.500" fill="#d7303a"/><path d="M1493.500 887l7-6" stroke="#fff" stroke-width="1.300"/>
<text x="1547" y="877" font-size="11.500" fill="#eef3f8" text-anchor="middle">16:13</text>
<text x="1547" y="893" font-size="11.500" fill="#eef3f8" text-anchor="middle">25.11.2017</text>
</svg>
</body></html>
